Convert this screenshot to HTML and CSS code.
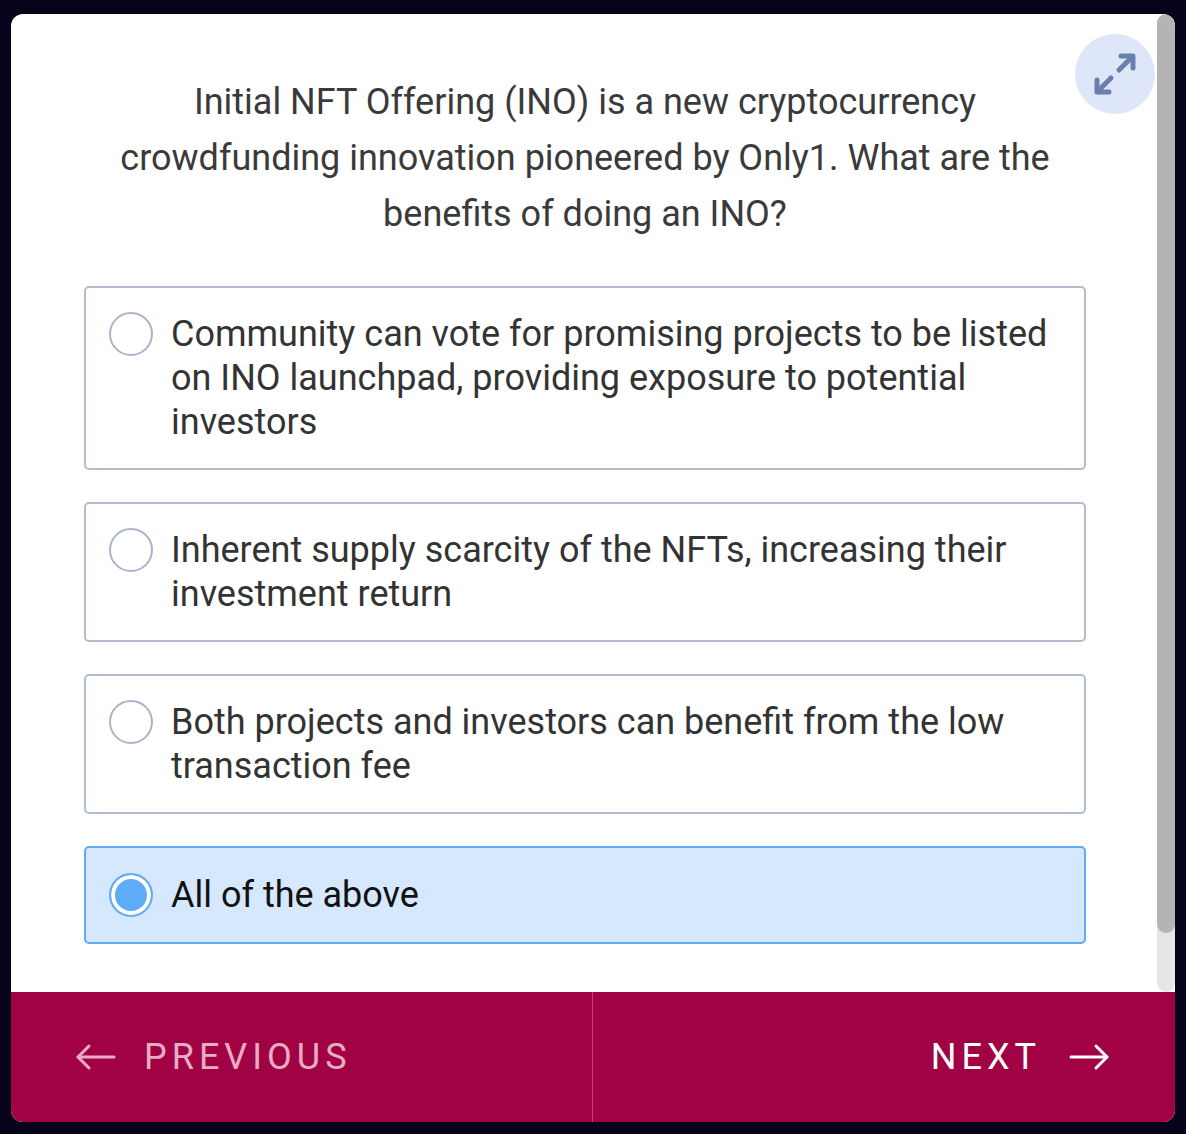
FILE: index.html
```html
<!DOCTYPE html>
<html lang="en">
  <head>
    <meta charset="UTF-8">
    <meta name="viewport" content="width=device-width, initial-scale=1.0">
    <title>INO Quiz</title>
    <link rel="stylesheet" href="styles.css">
  </head>
  <body>
<div class="quiz-card">
  <button class="expand-btn" type="button" aria-label="Expand">
    <svg width="44" height="44" viewBox="0 0 44 44" fill="none" stroke="#6a7fa9" stroke-width="5" stroke-linecap="round" stroke-linejoin="round">
      <polyline points="28,4 40,4 40,16" />
      <line x1="39" y1="5" x2="26" y2="18" />
      <polyline points="16,40 4,40 4,28" />
      <line x1="5" y1="39" x2="18" y2="26" />
    </svg>
  </button>

  <div class="quiz-main">
    <div class="quiz-body">
      <p class="question">
        Initial NFT Offering (INO) is a new cryptocurrency crowdfunding
        innovation pioneered by Only1. What are the benefits of doing an INO?
      </p>

      <div class="answers">
        <label class="answer">
          <span class="radio"></span>
          <span class="answer-text">Community can vote for promising projects to be listed on INO launchpad, providing exposure to potential investors</span>
        </label>
        <label class="answer">
          <span class="radio"></span>
          <span class="answer-text">Inherent supply scarcity of the NFTs, increasing their investment return</span>
        </label>
        <label class="answer">
          <span class="radio"></span>
          <span class="answer-text">Both projects and investors can benefit from the low transaction fee</span>
        </label>
        <label class="answer selected">
          <span class="radio"></span>
          <span class="answer-text">All of the above</span>
        </label>
      </div>
    </div>
    <!-- scroll track, drawn since the headless view hides scrollbars -->
    <div class="scroll-track">
      <div class="scroll-thumb"></div>
    </div>
  </div>

  <div class="quiz-nav">
    <button class="nav-btn prev" type="button">
      <svg width="42" height="28" viewBox="0 0 42 28" fill="none" stroke="currentColor" stroke-width="3" stroke-linecap="round" stroke-linejoin="round">
        <line x1="3" y1="14" x2="39" y2="14" />
        <polyline points="14,3 3,14 14,25" />
      </svg>
      <span>PREVIOUS</span>
    </button>
    <button class="nav-btn next" type="button">
      <span>NEXT</span>
      <svg width="42" height="28" viewBox="0 0 42 28" fill="none" stroke="currentColor" stroke-width="3" stroke-linecap="round" stroke-linejoin="round">
        <line x1="3" y1="14" x2="39" y2="14" />
        <polyline points="28,3 39,14 28,25" />
      </svg>
    </button>
  </div>
</div>
  </body>
</html>
```

FILE: styles.css
```css
body {
  margin: 0;
  padding: 14px 11px 12px 11px;
  background: #07031a;
  font-family: Roboto, "Liberation Sans", sans-serif;
}

.quiz-card {
  position: relative;
  width: 1164px;
  height: 1108px;
  background: white;
  border-radius: 12px;
  overflow: hidden;
  display: flex;
  flex-direction: column;
}

.quiz-main {
  flex: 1;
  display: flex;
  min-height: 0;
}

.quiz-body {
  flex: 1;
  overflow: hidden;
  padding: 60px 71px 0 73px;
}

.scroll-track {
  flex: none;
  width: 18px;
  background: #e6e6e6;
  border-radius: 9px;
  display: flex;
  flex-direction: column;
}
.scroll-thumb {
  height: 919px;
  background: #b4b4b4;
  border-radius: 9px;
}

.question {
  margin: 0 auto 44px auto;
  width: 960px;
  font-size: 36px;
  line-height: 56px;
  color: #3a3a3a;
  text-align: center;
}

.answers {
  display: flex;
  flex-direction: column;
  gap: 32px;
}

.answer {
  display: flex;
  align-items: flex-start;
  gap: 18px;
  padding: 24px 24px 24px 23px;
  border: 2px solid #b3bdd0;
  border-radius: 5px;
  cursor: pointer;
}
.answer-text {
  font-size: 36px;
  line-height: 44px;
  color: #333;
}

.radio {
  flex: none;
  box-sizing: border-box;
  width: 44px;
  height: 44px;
  border: 2px solid #a9b4cb;
  border-radius: 50%;
  background: white;
}

.answer.selected {
  background: #d6e8fd;
  border-color: #62acf7;
  padding-top: 25px;
  padding-bottom: 25px;
}
.answer.selected .answer-text {
  color: #111;
}
.answer.selected .radio {
  border-color: #62acf7;
  background: #5eabf8;
  box-shadow: inset 0 0 0 4px white;
}

.expand-btn {
  position: absolute;
  top: 20px;
  right: 20px;
  width: 80px;
  height: 80px;
  border: none;
  border-radius: 50%;
  background: #dde7f9;
  display: flex;
  align-items: center;
  justify-content: center;
  padding: 0;
  cursor: pointer;
  z-index: 5;
}

.quiz-nav {
  flex: none;
  height: 130px;
  display: flex;
  background: #a00244;
}

.nav-btn {
  flex: 1;
  display: flex;
  align-items: center;
  gap: 27px;
  border: none;
  background: none;
  font-family: Roboto, "Liberation Sans", sans-serif;
  font-size: 36px;
  letter-spacing: 5px;
  cursor: pointer;
}
.nav-btn.prev {
  padding: 0 0 0 64px;
  color: #e8adc6;
  border-right: 1px solid #c0416f;
}
.nav-btn.next {
  justify-content: flex-end;
  padding: 0 65px 0 0;
  color: white;
}
```
